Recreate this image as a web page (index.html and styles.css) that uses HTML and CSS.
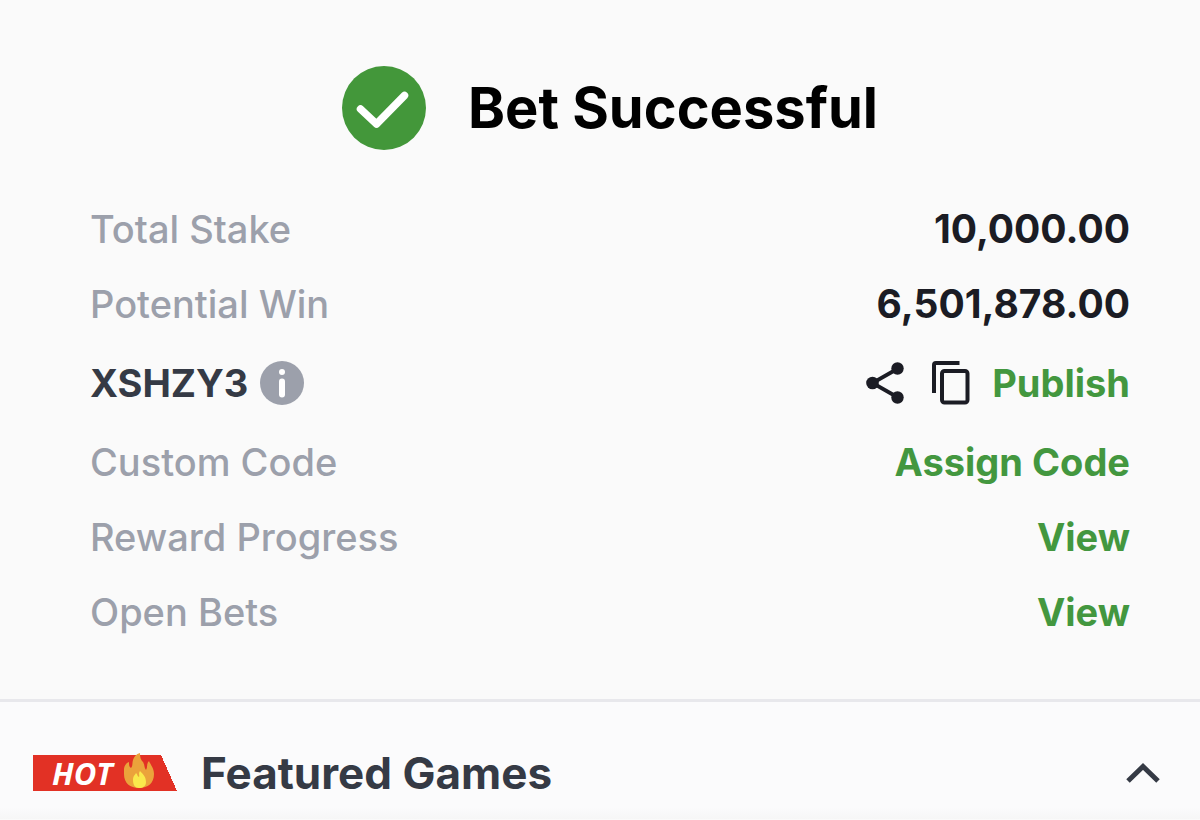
FILE: index.html
```html
<!DOCTYPE html>
<html lang="en">
<head>
    <meta charset="UTF-8">
    <meta name="viewport" content="width=device-width, initial-scale=1.0">
    <title>Bet Successful</title>
    <link rel="stylesheet" href="styles.css">
</head>
<body>
    <header>
        <svg class="check" viewBox="0 0 84 84" aria-hidden="true">
            <circle cx="42" cy="42" r="42" fill="#43973a"/>
            <path d="M18.500 43L34.500 58L62.500 29.500" fill="none" stroke="#fff" stroke-width="7.500" stroke-linecap="round" stroke-linejoin="round"/>
        </svg>
        <h1>Bet Successful</h1>
    </header>

    <!-- Bet details -->
    <main class="details">
        <div class="row">
            <span class="label">Total Stake</span>
            <span class="amount">10,000.00</span>
        </div>
        <div class="row">
            <span class="label">Potential Win</span>
            <span class="amount">6,501,878.00</span>
        </div>
        <div class="row code-row">
            <div class="code">
                <span>XSHZY3</span>
                <button type="button" aria-label="Code information">
                    <svg class="info" viewBox="0 0 44 44">
                        <circle cx="22" cy="22" r="22" fill="#9ca0ab"/>
                        <circle cx="22" cy="11" r="3" fill="#fff"/>
                        <path d="M22 20.500V33.500" stroke="#fff" stroke-width="6" stroke-linecap="round"/>
                    </svg>
                </button>
            </div>
            <div class="actions">
                <button type="button" aria-label="Share">
                    <svg class="share" viewBox="0 0 38 42">
                        <path d="M32 6.500L6.500 21L32 35.500" fill="none" stroke="#1b1c24" stroke-width="3.800"/>
                        <circle cx="31.500" cy="6.500" r="6.200" fill="#1b1c24"/>
                        <circle cx="6.500" cy="21" r="6.300" fill="#1b1c24"/>
                        <circle cx="31.500" cy="35.500" r="6.200" fill="#1b1c24"/>
                    </svg>
                </button>
                <button type="button" aria-label="Copy code">
                    <svg class="copy" viewBox="0 0 38 44">
                        <path d="M2 32V4Q2 2 4 2H27.500" fill="none" stroke="#1b1c24" stroke-width="4"/>
                        <rect x="10" y="10" width="25.500" height="31.500" rx="2.500" fill="none" stroke="#1b1c24" stroke-width="4"/>
                    </svg>
                </button>
                <a href="#publish">Publish</a>
            </div>
        </div>
        <div class="row">
            <span class="label">Custom Code</span>
            <a href="#assign">Assign Code</a>
        </div>
        <div class="row">
            <span class="label">Reward Progress</span>
            <a href="#rewards">View</a>
        </div>
        <div class="row">
            <span class="label">Open Bets</span>
            <a href="#bets">View</a>
        </div>
    </main>

    <!-- Featured games -->
    <section class="featured">
        <div class="hot">
            <span>HOT</span>
            <svg class="flame" viewBox="0 0 32 36" aria-hidden="true">
                <path d="M1 17C1 13 3 10 6 9C6 12 6 14 8 15C10 13 9 10 10 7C11 4 13 1 17 0C17 5 18 7 20 9C22 12 21 15 23 17C25 14 23 11 26 8C27 11 31 15 31 21C31 30 25 35 16 35C7 35 1 30 1 21Z" fill="#eba33b"/>
                <path d="M10 27C10 23 12 22 13 20C15 22 14 23 16 24C17 22 15 21 17 18C20 21 23 24 23 29C23 33 20 35 16 35C12 35 10 32 10 27Z" fill="#fae94c"/>
            </svg>
        </div>
        <h2>Featured Games</h2>
        <button type="button" class="toggle" aria-label="Collapse featured games">
            <svg class="chevron" viewBox="0 0 34 20">
                <path d="M2 18L17 3.500L32 18" fill="none" stroke="#353a45" stroke-width="5"/>
            </svg>
        </button>
    </section>
</body>
</html>
```

FILE: styles.css
```css
* {
    box-sizing: border-box;
}
body {
    font-family: Inter, "Liberation Sans", sans-serif;
    background-color: #fafafa;
    color: #353a45;
    margin: 0;
}
h1, h2 {
    margin: 0;
    font-weight: 700;
}
button {
    display: flex;
    padding: 0;
    border: none;
    background: none;
    cursor: pointer;
}
svg {
    display: block;
    flex: none;
}

/* Title */
header {
    display: flex;
    align-items: center;
    justify-content: center;
    gap: 42px;
    padding: 66px 0 41px 20px;
}
.check {
    width: 84px;
    height: 84px;
}
h1 {
    color: #000;
    font-size: 56px;
    line-height: 84px;
}

/* Bet details */
.details {
    padding: 0 70px 50px 90px;
    font-size: 38px;
    line-height: 48px;
}
.row {
    display: flex;
    align-items: center;
    justify-content: space-between;
    min-height: 75px;
}
.code-row {
    min-height: 83px;
}
.label {
    color: #9ca0ab;
    font-weight: 500;
}
.amount {
    color: #1b1c24;
    font-size: 39px;
    font-weight: 700;
}
.row a {
    color: #43973f;
    font-weight: 700;
    text-decoration: none;
}
.code, .actions {
    display: flex;
    align-items: center;
    gap: 12px;
    font-weight: 700;
}
.actions {
    gap: 22px;
}
.info {
    width: 44px;
    height: 44px;
}
.share {
    width: 38px;
    height: 42px;
    margin-right: 6px;
}
.copy {
    width: 38px;
    height: 44px;
}

/* Featured games */
.featured {
    display: flex;
    align-items: center;
    border-top: 3px solid #e8e8ec;
    padding: 42px 40px 17px 33px;
    background: linear-gradient(#fbfbfc 90%, #f6f6f6);
}
.hot {
    display: flex;
    align-items: center;
    gap: 10px;
    width: 144px;
    height: 36px;
    padding-left: 19px;
    background: linear-gradient(#e23125, #e23125) 0 0 / 128px 36px no-repeat,
        linear-gradient(to top right, #e23125 50%, transparent 50%) 128px 0 / 16px 36px no-repeat;
    color: #fff;
    font: italic 700 31px/36px "Open Sans", sans-serif;
}
.flame {
    width: 32px;
    height: 36px;
    margin-bottom: 4px;
}
h2 {
    margin-left: 24px;
    font-size: 44px;
    line-height: 58px;
}
.toggle {
    margin-left: auto;
}
.chevron {
    width: 34px;
    height: 20px;
}
```
